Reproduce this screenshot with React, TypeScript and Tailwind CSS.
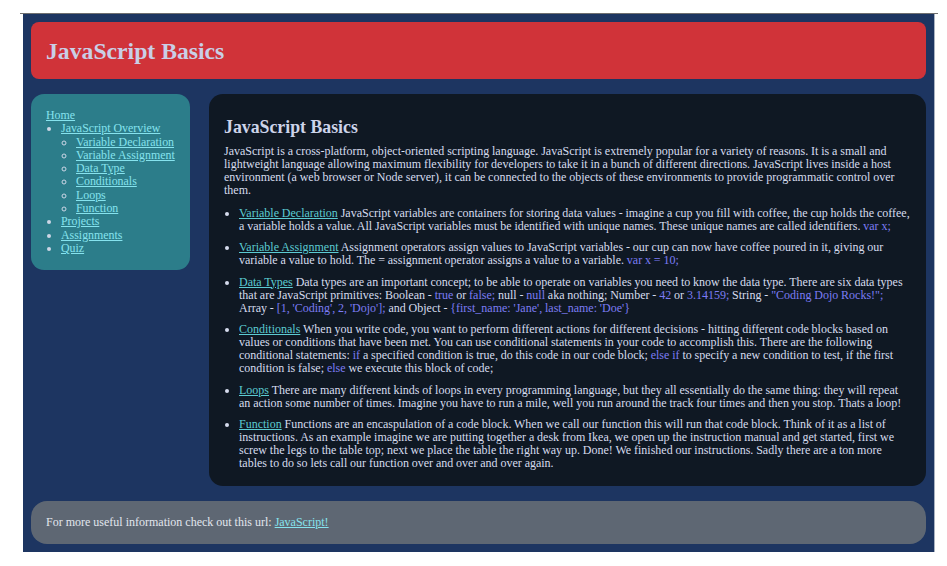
import React from "react";

const serif = { fontFamily: '"Liberation Serif", "Times New Roman", serif' };

function Code({ children }: { children: React.ReactNode }) {
  return <span className="text-[#7c7cf4]">{children}</span>;
}

function MLink({ children }: { children: React.ReactNode }) {
  return (
    <a href="#" className="text-[#5ccbd2] underline">
      {children}
    </a>
  );
}

function SLink({ children }: { children: React.ReactNode }) {
  return (
    <a href="#" className="text-[#86e3ee] underline">
      {children}
    </a>
  );
}

export default function App() {
  return (
    <div className="min-h-[566px] bg-white pt-[13px] pl-[20px]" style={serif}>
      <div className="w-[918px] border-t-[1px] border-[#6f6f6f]">
        <div className="ml-[3px] w-[912px] border-r border-[#aab3c2] bg-[#1d3561] px-[8px] pt-[8px] pb-[8px] text-[12px] text-[#d6dcee]">
          <header className="h-[57px] rounded-[8px] bg-[#d03339] pl-[15px] pt-[15px]">
            <h1 className="text-[23.7px] font-bold leading-[28px] text-[#c9cfe6]">JavaScript Basics</h1>
          </header>

          <div className="mt-[15px] flex items-start gap-[19px]">
            <nav className="w-[159px] shrink-0 rounded-[13px] bg-[#2c7d8a] px-[15px] pt-[15px] pb-[15px] text-[11.9px] leading-[13.3px] text-[#cdd6e6]">
              <SLink>Home</SLink>
              <ul className="list-disc pl-[15px]">
                <li>
                  <SLink>JavaScript Overview</SLink>
                  <ul className="list-[circle] pl-[15px]">
                    <li><SLink>Variable Declaration</SLink></li>
                    <li><SLink>Variable Assignment</SLink></li>
                    <li><SLink>Data Type</SLink></li>
                    <li><SLink>Conditionals</SLink></li>
                    <li><SLink>Loops</SLink></li>
                    <li><SLink>Function</SLink></li>
                  </ul>
                </li>
                <li><SLink>Projects</SLink></li>
                <li><SLink>Assignments</SLink></li>
                <li><SLink>Quiz</SLink></li>
              </ul>
            </nav>

            <main className="w-[718px] rounded-[14px] bg-[#0f1823] px-[15px] pt-[23px] pb-[16px] leading-[13px] [word-spacing:-0.15px]">
              <h2 className="text-[17.8px] font-bold leading-[20px] text-[#cdd4ea] [word-spacing:0px]">JavaScript Basics</h2>
              <p className="mt-[8px]">
                JavaScript is a cross-platform, object-oriented scripting language. JavaScript is extremely popular for a variety of reasons. It is a small and lightweight language allowing maximum flexibility for developers to take it in a bunch of different directions. JavaScript lives inside a host environment (a web browser or Node server), it can be connected to the objects of these environments to provide programmatic control over them.
              </p>
              <ul className="mt-[9.5px] list-disc pl-[15px]">
                <li className="mb-[8.5px]">
                  <MLink>Variable Declaration</MLink> JavaScript variables are containers for storing data values - imagine a cup you fill with coffee, the cup holds the coffee, a variable holds a value. All JavaScript variables must be identified with unique names. These unique names are called identifiers. <Code>var x;</Code>
                </li>
                <li className="mb-[8.5px]">
                  <MLink>Variable Assignment</MLink> Assignment operators assign values to JavaScript variables - our cup can now have coffee poured in it, giving our variable a value to hold. The = assignment operator assigns a value to a variable. <Code>var x = 10;</Code>
                </li>
                <li className="mb-[8.5px]">
                  <MLink>Data Types</MLink> Data types are an important concept; to be able to operate on variables you need to know the data type. There are six data types that are JavaScript primitives: Boolean - <Code>true</Code> or <Code>false;</Code> null - <Code>null</Code> aka nothing; Number - <Code>42</Code> or <Code>3.14159;</Code> String - <Code>"Coding Dojo Rocks!";</Code> Array - <Code>[1, 'Coding', 2, 'Dojo'];</Code> and Object - <Code>{"{first_name: 'Jane', last_name: 'Doe'}"}</Code>
                </li>
                <li className="mb-[8.5px]">
                  <MLink>Conditionals</MLink> When you write code, you want to perform different actions for different decisions - hitting different code blocks based on values or conditions that have been met. You can use conditional statements in your code to accomplish this. There are the following conditional statements: <Code>if</Code> a specified condition is true, do this code in our code block; <Code>else if</Code> to specify a new condition to test, if the first condition is false; <Code>else</Code> we execute this block of code;
                </li>
                <li className="mb-[8.5px]">
                  <MLink>Loops</MLink> There are many different kinds of loops in every programming language, but they all essentially do the same thing: they will repeat an action some number of times. Imagine you have to run a mile, well you run around the track four times and then you stop. Thats a loop!
                </li>
                <li>
                  <MLink>Function</MLink> Functions are an encaspulation of a code block. When we call our function this will run that code block. Think of it as a list of instructions. As an example imagine we are putting together a desk from Ikea, we open up the instruction manual and get started, first we screw the legs to the table top; next we place the table the right way up. Done! We finished our instructions. Sadly there are a ton more tables to do so lets call our function over and over and over again.
                </li>
              </ul>
            </main>
          </div>

          <footer className="mt-[15px] rounded-[16px] bg-[#5e6773] px-[15px] py-[15px] leading-[13px] text-[#e2e6ee]">
            For more useful information check out this url: <SLink>JavaScript!</SLink>
          </footer>
        </div>
      </div>
    </div>
  );
}
